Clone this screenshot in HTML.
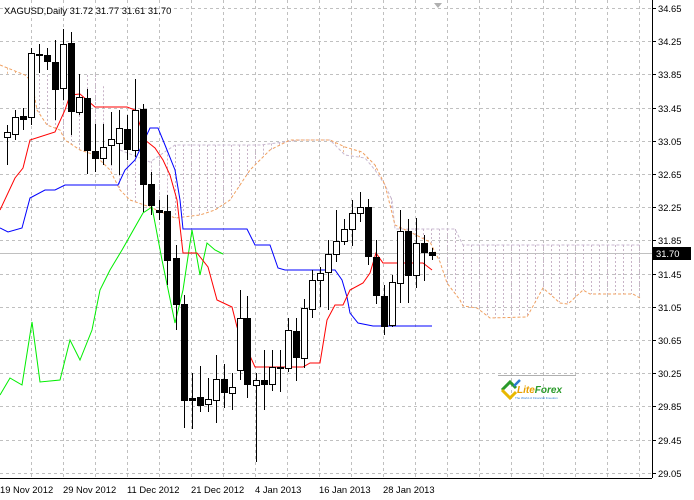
<!DOCTYPE html>
<html><head><meta charset="utf-8"><style>
html,body{margin:0;padding:0;background:#fff;width:694px;height:500px;overflow:hidden}
svg{display:block}
text{font-family:"Liberation Sans",sans-serif;font-size:9.4px;fill:#000}
</style></head><body>
<svg id="s" width="694" height="500" viewBox="0 0 694 500" xmlns="http://www.w3.org/2000/svg">
<g id="grid" stroke="#c0c0c0" stroke-dasharray="3,3" stroke-width="1"></g>
<g id="cloud" stroke-width="1" stroke-dasharray="2,2"></g>
<line x1="0" y1="253.5" x2="652" y2="253.5" stroke="#c0c0c0"/>
<g id="lines" fill="none" stroke-width="1"></g>
<g id="candles" stroke="#000" stroke-width="1"></g>
<line x1="652.5" y1="0" x2="652.5" y2="478" stroke="#000"/>
<line x1="0" y1="478.5" x2="652" y2="478.5" stroke="#000"/>
<polygon points="434,3 442,3 438,8" fill="#b0b0b0"/>
<text x="4" y="14">XAGUSD,Daily  31.72 31.77 31.61 31.70</text>
<g id="ylab"></g>
<rect x="653" y="247" width="38" height="13" fill="#000"/>
<text x="656" y="257" style="fill:#fff">31.70</text>
<g>
<text x="0" y="493">19 Nov 2012</text>
<text x="63" y="493">29 Nov 2012</text>
<text x="127" y="493">11 Dec 2012</text>
<text x="191" y="493">21 Dec 2012</text>
<text x="255" y="493">4 Jan 2013</text>
<text x="319" y="493">16 Jan 2013</text>
<text x="383" y="493">28 Jan 2013</text>
</g>
<line x1="498" y1="375.5" x2="576" y2="375.5" stroke="#b0b0b0"/>
<g transform="translate(500,378)">
<path d="M2,12 L10,4 L16,10" fill="none" stroke="#2a9a2a" stroke-width="3"/>
<path d="M2,12 L10,20 L16,14" fill="none" stroke="#e8b800" stroke-width="3"/>
<path d="M14,8 L20,2" stroke="#2a7ad0" stroke-width="2.5"/>
<text x="17" y="15" style="font-size:10px;font-weight:bold;font-style:italic;fill:#e8a000">Lite<tspan style="fill:#2a9a2a">Forex</tspan></text>
<text x="15" y="21" style="font-size:3px;fill:#2a7ad0">The World of Financial Freedom</text>
</g>
</svg>
<script>
var NS="http://www.w3.org/2000/svg";
function el(p,t,a){var e=document.createElementNS(NS,t);for(var k in a)e.setAttribute(k,a[k]);p.appendChild(e);return e;}
var g=document.getElementById('grid');
for(var x=31;x<652;x+=32)el(g,'line',{x1:x+.5,y1:0,x2:x+.5,y2:478});
var labs=["34.65","34.25","33.85","33.45","33.05","32.65","32.25","31.85","31.45","31.05","30.65","30.25","29.85","29.45","29.05"];
var yl=document.getElementById('ylab');
for(var i=0;i<15;i++){var y=Math.round(8+i*33.2);
 el(g,'line',{x1:0,y1:y+.5,x2:652,y2:y+.5});
 el(yl,'line',{x1:652,y1:y+.5,x2:656,y2:y+.5,stroke:'#000'});
 var t=el(yl,'text',{x:658,y:y+4});t.textContent=labs[i];}
function interp(pts,x){if(x<=pts[0][0])return pts[0][1];for(var i=1;i<pts.length;i++){if(x<=pts[i][0]){var a=pts[i-1],b=pts[i];return a[1]+(b[1]-a[1])*(x-a[0])/(b[0]-a[0]);}}return pts[pts.length-1][1];}
var A=[[0,65],[25,75],[32,82],[37,110],[47,125],[60,130],[65,140],[80,150],[95,155],[110,170],[120,190],[130,200],[150,207],[175,218],[200,215],[215,210],[230,200],[250,170],[270,150],[290,140],[330,140],[345,147],[362,152],[375,165],[385,185],[395,225],[410,232],[430,242],[440,262],[447,283],[460,300],[463,306],[477,308],[490,318],[527,317],[543,288],[560,303],[568,304],[583,290],[590,294],[633,294],[640,298]];
var B=[[0,75],[100,75],[120,150],[150,162],[175,145],[260,145],[300,140],[330,140],[345,155],[365,158],[375,170],[385,185],[392,200],[395,229],[455,229],[463,245],[640,245]];
var c=document.getElementById('cloud');
for(var x=7;x<=640;x+=8){var a=interp(A,x),b=interp(B,x);
 el(c,'line',{x1:x+.5,y1:Math.min(a,b),x2:x+.5,y2:Math.max(a,b),stroke:(a<b)?'#e8b890':'#c8b4c8'});}
var L=document.getElementById('lines');
function pl(pts,col,dash){var a={points:pts.map(function(p){return p.join(',')}).join(' '),stroke:col};if(dash)a['stroke-dasharray']=dash;el(L,'polyline',a);}
pl(B.filter(function(p){return p[0]>=120}),'#c8b8d0','3,2');
pl(A,'#f0a060','3,2');
pl([[0,395],[10,378],[22,385],[32,322],[40,382],[60,380],[70,340],[80,360],[92,330],[100,290],[110,270],[122,250],[143,213],[152,207],[162,260],[175,323],[183,290],[192,230],[200,275],[207,243],[215,250],[223,254]],'#00ee00');
pl([[0,228],[8,232],[22,228],[30,198],[45,190],[55,190],[65,185],[118,185],[125,170],[135,160],[150,128],[158,128],[165,145],[175,170],[180,200],[183,229],[247,229],[255,245],[270,245],[278,268],[285,270],[335,270],[342,280],[347,297],[350,313],[358,323],[373,326],[432,326]],'#0000ff');
pl([[0,210],[15,178],[23,168],[30,140],[55,132],[65,110],[70,95],[80,94],[95,107],[127,107],[135,110],[145,140],[155,148],[163,160],[170,175],[177,200],[183,253],[197,253],[208,267],[217,300],[232,307],[237,327],[255,367],[303,367],[310,363],[320,363],[327,320],[335,305],[343,305],[350,290],[363,283],[370,273],[376,253],[383,263],[423,263],[432,270]],'#ff0000');
var K=[[7,'w',132,137,125,165],[15,'w',117,134,110,140],[23,'b',116,119,108,130],[31,'w',53,117,48,125],[39,'b',54,55,44,73],[47,'b',55,61,48,70],[55,'b',62,89,40,120],[63,'w',44,88,29,100],[71,'b',43,111,32,135],[79,'w',97,112,74,115],[87,'b',98,150,89,174],[95,'b',151,158,124,172],[103,'w',147,158,124,165],[111,'w',139,145,112,165],[119,'w',128,143,110,175],[127,'b',129,149,115,160],[135,'w',110,150,79,157],[143,'b',109,184,104,212],[151,'b',184,205,172,215],[159,'b',210,212,200,220],[167,'b',211,260,195,285],[176,'b',258,304,245,330],[184,'b',304,400,295,428],[192,'b',398,400,373,429],[200,'b',397,405,366,412],[208,'w',399,404,378,412],[216,'w',379,400,355,423],[224,'b',379,392,364,408],[232,'w',387,393,373,410],[240,'w',318,370,290,380],[247,'b',318,384,296,398],[256,'w',380,385,373,462],[264,'b',380,384,350,410],[272,'w',367,384,350,391],[280,'b',367,368,350,392],[288,'w',330,368,318,372],[296,'b',331,357,318,381],[304,'w',308,358,299,368],[312,'w',280,309,270,318],[320,'w',273,280,267,307],[328,'w',254,272,240,310],[336,'w',241,254,210,262],[344,'w',229,241,219,245],[352,'w',213,229,200,246],[360,'w',207,213,192,222],[368,'b',207,256,199,265],[376,'b',257,295,240,304],[384,'b',296,326,285,335],[392,'w',282,325,275,327],[400,'w',231,283,210,303],[408,'b',231,275,219,303],[416,'w',243,275,218,288],[424,'b',243,252,235,281],[432,'b',252,255,248,260]];
var C=document.getElementById('candles');
K.forEach(function(k){var x=k[0]+.5;
 el(C,'line',{x1:x,y1:k[4],x2:x,y2:k[5]});
 var h=Math.max(1,k[3]-k[2]);
 el(C,'rect',{x:x-3,y:k[2]+.5,width:6,height:h,fill:k[1]=='w'?'#fff':'#000'});});
</script>
</body></html>
